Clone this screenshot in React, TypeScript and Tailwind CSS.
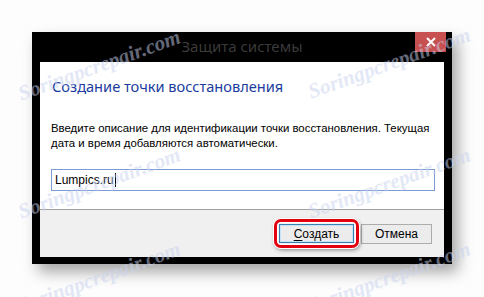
const marks = [
  { left: 14, top: 50 },
  { left: 304, top: 48 },
  { left: 14, top: 168 },
  { left: 304, top: 168 },
  { left: 14, top: 262 },
  { left: 304, top: 262 },
];

function Watermark({ left, top }: { left: number; top: number }) {
  return (
    <span
      className="pointer-events-none absolute -rotate-[20deg] whitespace-nowrap font-['Liberation_Serif',serif] text-[21px] font-bold italic text-[#c9d2ee] opacity-50"
      style={{ left, top }}
    >
      Soringpcrepair.com
    </span>
  );
}

export default function App() {
  return (
    <div className="relative h-[297px] w-[484px] overflow-hidden bg-[#fdfdfd] pl-[32px] pt-[32px] font-['Noto_Sans','Open_Sans',sans-serif]">
      <div className="flex h-[232px] w-[420px] flex-col bg-black px-[8px] pb-[7px] shadow-[6px_8px_14px_rgba(0,0,0,0.35)]">
        {/* title bar */}
        <div className="relative flex h-[30px] shrink-0 items-center justify-center">
          <span className="pb-[2px] text-[15px] text-[#3a3a3a]">Защита системы</span>
          <button className="absolute right-[-2px] top-0 flex h-[20px] w-[31px] items-center justify-center bg-[#c75050]">
            <svg width="10" height="10" viewBox="0 0 10 10">
              <path d="M1 1 L9 9 M9 1 L1 9" stroke="#fff" strokeWidth="2" />
            </svg>
          </button>
        </div>

        {/* body */}
        <div className="flex h-[147px] flex-col bg-white pl-[11px] pr-[9px]">
          <h1 className="mt-[14px] pl-[1px] text-[14.6px] leading-[20px] text-[#1b3c9e]">
            Создание точки восстановления
          </h1>
          <p className="mt-[25px] whitespace-nowrap font-['Liberation_Sans',Arial,sans-serif] text-[11.4px] leading-[15px] text-black">
            Введите описание для идентификации точки восстановления. Текущая
            <br />
            дата и время добавляются автоматически.
          </p>
          <div className="mt-[18px] flex h-[22px] items-center border border-[#7a9cd3] pl-[3px] font-['Liberation_Sans',Arial,sans-serif] text-[12px] text-black">
            Lumpics.ru
            <span className="ml-[1px] h-[14px] w-px bg-black" />
          </div>
        </div>

        {/* footer */}
        <div className="relative flex flex-1 items-start justify-end gap-[7px] border-t border-[#a0a0a0] bg-[#f0f0f0] pr-[12px] pt-[14px] font-['Liberation_Sans',Arial,sans-serif]">
          <button className="flex h-[19px] w-[75px] items-center justify-center border border-[#3c7fb1] bg-[#ececec] text-[12px] text-black shadow-[inset_0_0_0_1px_#c5e3f7]">
            <span>
              <span className="underline underline-offset-2">С</span>оздать
            </span>
          </button>
          <button className="flex h-[20px] w-[71px] items-center justify-center border border-[#acacac] bg-[#ececec] text-[12px] text-black">
            Отмена
          </button>
          <div className="pointer-events-none absolute left-[234px] top-[9px] h-[29px] w-[85px] rounded-[7px] border-[3px] border-[#e3000f] shadow-[0_0_0_1px_#fff,1px_2px_4px_rgba(0,0,0,0.45),inset_0_0_0_1px_#fff]" />
        </div>
      </div>

      {marks.map((m, i) => (
        <Watermark key={i} left={m.left} top={m.top} />
      ))}
    </div>
  );
}
